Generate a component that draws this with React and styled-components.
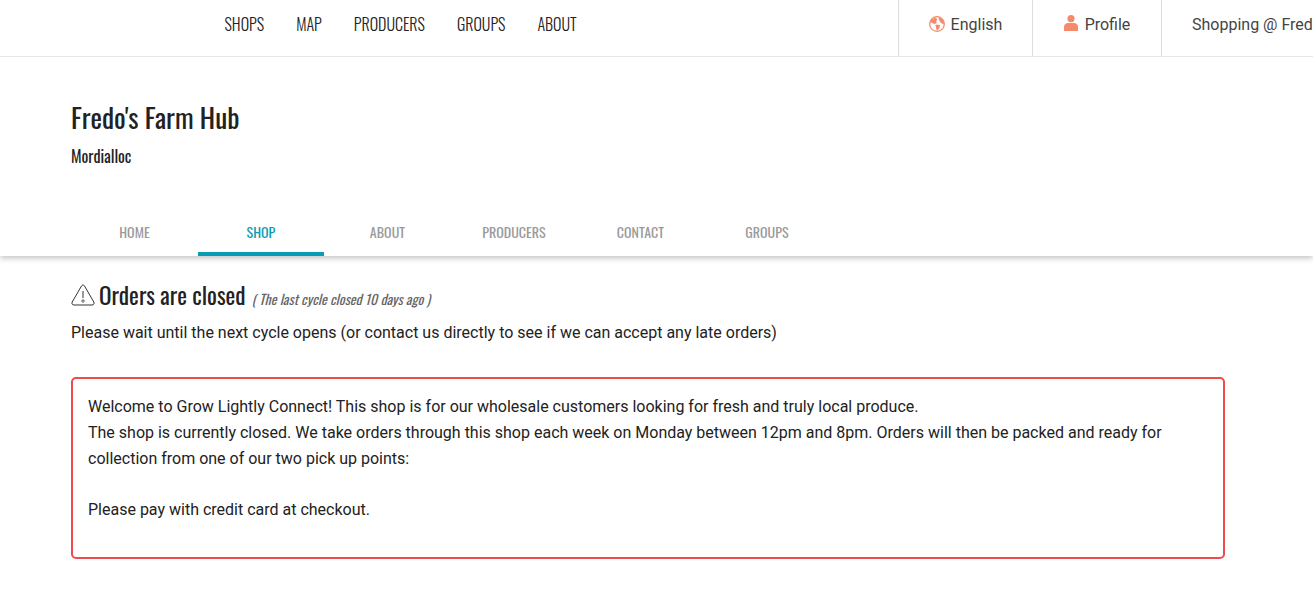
import React from 'react';
import styled, { createGlobalStyle } from 'styled-components';

const condensed = `'Oswald', 'Liberation Sans Narrow', 'Roboto Condensed', 'Liberation Sans', sans-serif`;

const GlobalStyle = createGlobalStyle`
    html, body {
        margin: 0;
        padding: 0;
        background: #fff;
        overflow: hidden;
    }
    body {
        font-family: 'Roboto', sans-serif;
        font-size: 16px;
        color: #222;
    }
`;

const tabs = ['Home', 'Shop', 'About', 'Producers', 'Contact', 'Groups'];
const links = ['Shops', 'Map', 'Producers', 'Groups', 'About'];

function GlobeIcon() {
    return (
        <svg width="16" height="16" viewBox="0 0 16 16">
            <circle cx="8" cy="8" r="7.3" fill="none" stroke="#f58b6c" strokeWidth="1.3" />
            <path d="M2 4 L6.5 1.5 L8.5 3.5 L7 5.5 L8 7 L5.5 8 L2 6.5 Z M6.5 8.5 L11 9 L10.5 12 L8 15 L7 12 Z M9.5 1 L14.5 4 L15 8.5 L12 7 L10 4 Z" fill="#f58b6c" />
        </svg>
    );
}

function UserIcon() {
    return (
        <UserSvg width="14" height="16" viewBox="0 0 14 16">
            <circle cx="7" cy="3.7" r="3.6" fill="#f58b6c" />
            <path d="M0 16 V12 C0 9.5 2 8 4 8 H10 C12 8 14 9.5 14 12 V16 Z" fill="#f58b6c" />
        </UserSvg>
    );
}

function WarningIcon() {
    return (
        <svg width="24" height="22" viewBox="0 0 24 22" fill="none">
            <path d="M10.6 1.8 C11.3 0.7 12.7 0.7 13.4 1.8 L22.8 18 C23.6 19.5 22.8 21 21 21 H3 C1.2 21 0.4 19.5 1.2 18 Z" stroke="#3a3230" strokeWidth="1" strokeLinejoin="round" />
            <path d="M12 7 V14" stroke="#3a3230" strokeWidth="1" />
            <circle cx="12" cy="17" r="1.2" stroke="#3a3230" strokeWidth="0.8" />
        </svg>
    );
}

export default function App() {
    return (
        <Page>
            <GlobalStyle />
            <TopBar>
                <MainNav>
                    {links.map((item) => (
                        <MainLink key={item}>{item}</MainLink>
                    ))}
                </MainNav>
                <SideNav>
                    <SideItem $width={134} $gap={6}><GlobeIcon />English</SideItem>
                    <SideItem $width={129} $gap={7}><UserIcon />Profile</SideItem>
                    <ShopItem>Shopping @ Fredo's Farm Hub</ShopItem>
                </SideNav>
            </TopBar>
            <Header>
                <ShopName>Fredo's Farm Hub</ShopName>
                <Suburb>Mordialloc</Suburb>
            </Header>
            <TabBar>
                <TabRow>
                    {tabs.map((item) => (
                        <Tab key={item} $active={item === 'Shop'}>{item}</Tab>
                    ))}
                </TabRow>
            </TabBar>
            <Content>
                <Status>
                    <WarningIcon />
                    <StatusTitle>Orders are closed</StatusTitle>
                    <StatusNote>( The last cycle closed 10 days ago )</StatusNote>
                </Status>
                <Hint>Please wait until the next cycle opens (or contact us directly to see if we can accept any late orders)</Hint>
                <Notice>
                    Welcome to Grow Lightly Connect! This shop is for our wholesale customers looking for fresh and truly local produce.
                    <br />
                    The shop is currently closed. We take orders through this shop each week on Monday between 12pm and 8pm. Orders will then be packed and ready for collection from one of our two pick up points:
                    <br />
                    <br />
                    Please pay with credit card at checkout.
                </Notice>
            </Content>
        </Page>
    );
}

const Page = styled.div`
    width: 1313px;
    height: 594px;
    overflow: hidden;
`;

const TopBar = styled.div`
    display: flex;
    justify-content: space-between;
    height: 56px;
    border-bottom: 1px solid #e6e6e6;
`;

const MainNav = styled.nav`
    display: flex;
    align-items: center;
    gap: 32px;
    padding: 0 0 8px 224.5px;
`;

const MainLink = styled.a`
    font-family: ${condensed};
    font-size: 16px;
    font-weight: 300;
    color: #222;
    text-transform: uppercase;
`;

const SideNav = styled.div`
    display: flex;
    width: 415px;
    flex-shrink: 0;
    overflow: hidden;
`;

const SideItem = styled.div`
    display: flex;
    align-items: center;
    justify-content: center;
    gap: ${(props) => props.$gap}px;
    box-sizing: border-box;
    width: ${(props) => props.$width}px;
    flex-shrink: 0;
    padding-bottom: 8px;
    border-left: 1px solid #ddd;
    color: #444;
    white-space: nowrap;
`;

const UserSvg = styled.svg`
    margin-top: -2px;
`;

const ShopItem = styled(SideItem)`
    width: auto;
    justify-content: flex-start;
    padding-left: 30px;
`;

const Header = styled.div`
    position: relative;
    z-index: 1;
    padding: 42px 71px 0;
    height: 150px;
    box-sizing: border-box;
    background: #fff;
`;

const ShopName = styled.h1`
    margin: 0;
    font-family: ${condensed};
    font-size: 27.4px;
    font-weight: 400;
    line-height: 36px;
    color: #222;
`;

const Suburb = styled.div`
    margin-top: 11px;
    font-family: ${condensed};
    font-size: 16px;
    line-height: 20px;
    color: #222;
`;

const TabBar = styled.div`
    height: 49px;
    box-shadow: 0 2px 6px rgba(0, 0, 0, 0.25);
`;

const TabRow = styled.div`
    display: flex;
    padding-left: 71.2px;
    height: 100%;
`;

const Tab = styled.a`
    box-sizing: border-box;
    width: 126.5px;
    padding-top: 4px;
    display: flex;
    align-items: center;
    justify-content: center;
    font-family: ${condensed};
    font-size: 14px;
    text-transform: uppercase;
    color: ${(props) => (props.$active ? '#0b9cb5' : '#9a9a9a')};
    border-bottom: 4px solid ${(props) => (props.$active ? '#0b9cb5' : 'transparent')};
`;

const Content = styled.div`
    padding: 25px 88px 0 71px;
`;

const Status = styled.div`
    display: flex;
    align-items: center;
    gap: 4px;
    height: 28px;
`;

const StatusTitle = styled.span`
    padding-bottom: 2px;
    font-family: ${condensed};
    font-size: 23.2px;
    color: #222;
`;

const StatusNote = styled.em`
    margin-left: 2px;
    padding-top: 7px;
    font-family: ${condensed};
    font-size: 13.8px;
    color: #666;
`;

const Hint = styled.p`
    margin: 12px 0 0;
    line-height: 24px;
    color: #222;
`;

const Notice = styled.div`
    box-sizing: border-box;
    height: 182px;
    margin-top: 32px;
    padding: 15.4px 48px 0 15px;
    border: 2px solid #f04a4a;
    border-radius: 5px;
    line-height: 25.6px;
    color: #222;
`;
